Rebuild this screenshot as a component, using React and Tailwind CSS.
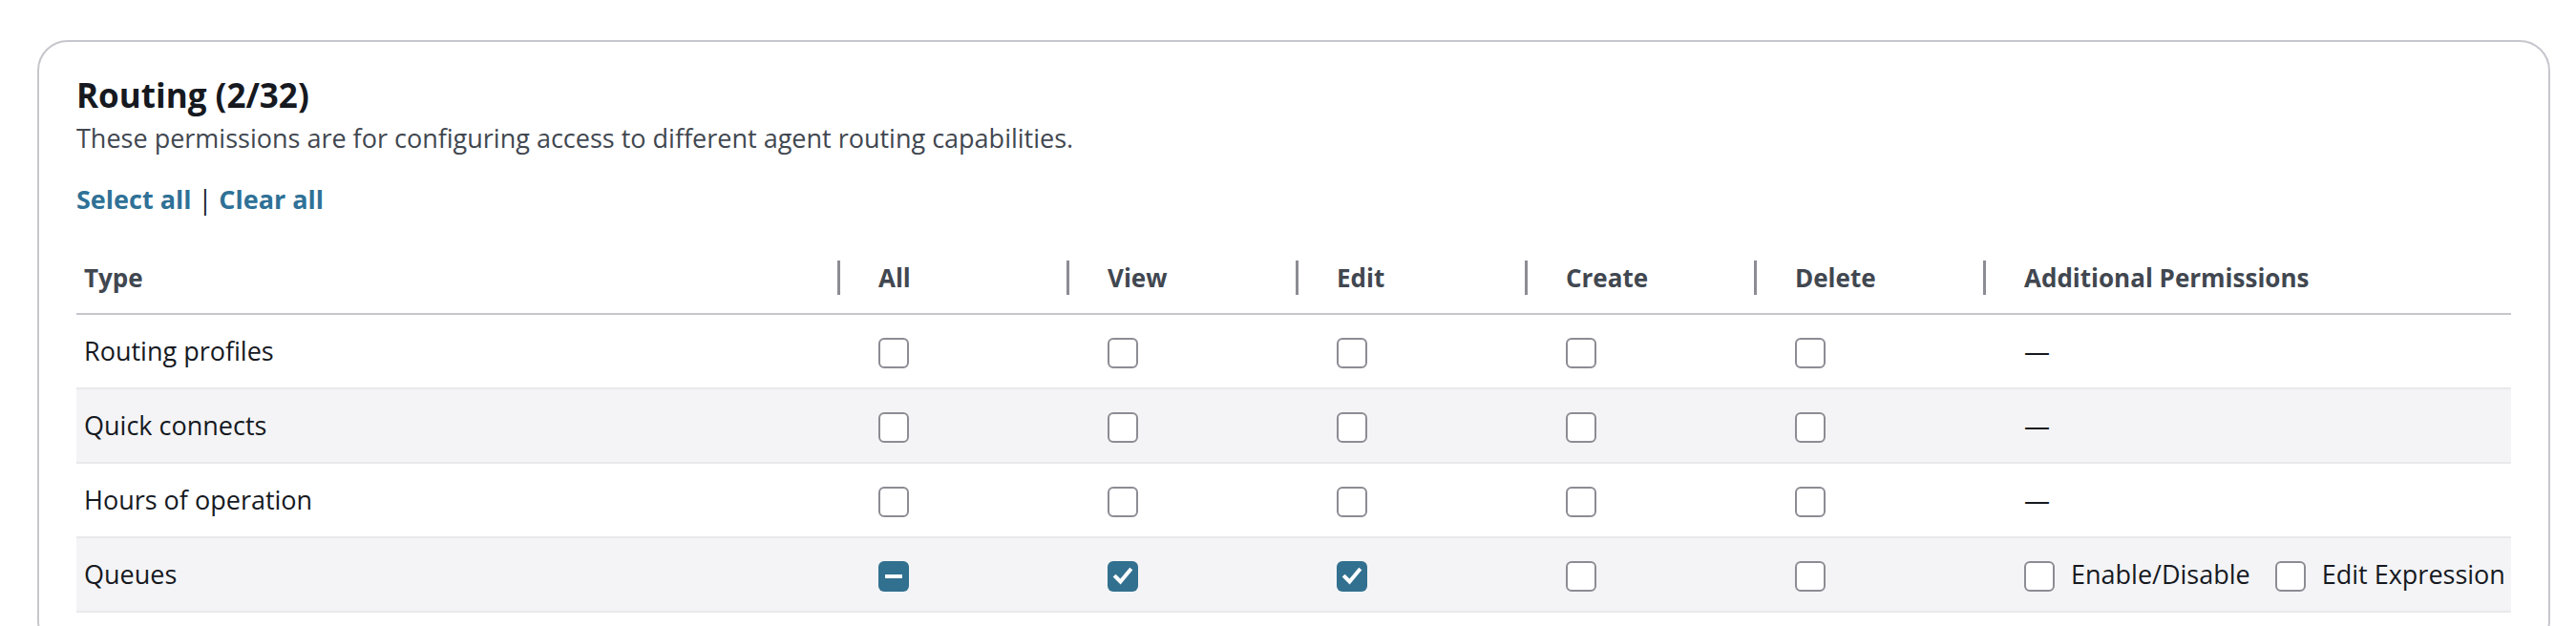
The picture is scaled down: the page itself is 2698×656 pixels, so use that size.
import React from 'react';

const font = { fontFamily: '"Open Sans", "Noto Sans", Arial, sans-serif' };

const columns = ['All', 'View', 'Edit', 'Create', 'Delete'];

const rows = [
    { name: 'Routing profiles', perms: ['off', 'off', 'off', 'off', 'off'], extra: null },
    { name: 'Quick connects', perms: ['off', 'off', 'off', 'off', 'off'], extra: null },
    { name: 'Hours of operation', perms: ['off', 'off', 'off', 'off', 'off'], extra: null },
    { name: 'Queues', perms: ['mixed', 'on', 'on', 'off', 'off'], extra: ['Enable/Disable', 'Edit Expression'] },
];

function Checkbox({ state }) {
    if (state === 'on') {
        return (
            <span className="flex h-8 w-8 shrink-0 items-center justify-center rounded-[6px] bg-[#32708f]">
                <svg width="32" height="32" viewBox="0 0 32 32" fill="none">
                    <polyline points="8.5,16.5 13.5,21.5 23.5,9.5" stroke="white" strokeWidth="4" strokeLinecap="square" strokeLinejoin="miter" />
                </svg>
            </span>
        );
    }
    if (state === 'mixed') {
        return (
            <span className="flex h-8 w-8 shrink-0 items-center justify-center rounded-[6px] bg-[#32708f]">
                <span className="block h-1 w-[18px] bg-white" />
            </span>
        );
    }
    return <span className="block h-8 w-8 shrink-0 rounded-[6px] border-2 border-[#8c8c94] bg-white" />;
}

function HeaderCell({ label, wide }) {
    return (
        <div className={`flex items-center ${wide ? 'flex-1' : 'w-[240px]'}`}>
            <span className="block h-9 w-[3px] bg-[#8c8c94]" />
            <span className="whitespace-nowrap pl-10 text-[26px] font-bold leading-9 text-[#414750]">{label}</span>
        </div>
    );
}

function Row({ row, shaded }) {
    return (
        <div className={`flex h-[78px] border-b-2 border-[#e9e9ed] ${shaded ? 'bg-[#f4f4f6]' : 'bg-white'}`}>
            <div className="flex w-[797px] items-center pl-2 text-[27px] leading-9 text-[#16191f]">{row.name}</div>
            {row.perms.map((p, i) => (
                <div key={i} className="flex w-[240px] items-center pl-[43px] pt-1">
                    <Checkbox state={p} />
                </div>
            ))}
            <div className="flex flex-1 items-center whitespace-nowrap pl-[43px] text-[27px] leading-9 text-[#16191f]">
                {row.extra ? (
                    <div className="flex items-center gap-[26px] pt-1">
                        {row.extra.map((label) => (
                            <div key={label} className="flex items-center gap-[17px]">
                                <Checkbox state="off" />
                                <span className="-mt-1">{label}</span>
                            </div>
                        ))}
                    </div>
                ) : (
                    <span>—</span>
                )}
            </div>
        </div>
    );
}

export default function App() {
    return (
        <div className="min-h-[656px] overflow-hidden bg-white pl-[39px] pr-[27px] pt-[42px]" style={font}>
            <div className="rounded-[32px] border-2 border-[#c6c6cd] bg-white px-[39px] pb-10 pt-[34px]">
                <h2 className="text-[35px] font-bold leading-[44px] text-[#16191f]">Routing (2/32)</h2>
                <p className="mt-[3px] text-[27px] leading-10 text-[#414750]">
                    These permissions are for configuring access to different agent routing capabilities.
                </p>
                <div className="mt-6 text-[27px] leading-10">
                    <a className="font-bold text-[#2f7197]">Select all</a>
                    <span className="text-[#16191f]"> | </span>
                    <a className="font-bold text-[#2f7197]">Clear all</a>
                </div>

                <div className="mt-[26px]">
                    <div className="flex border-b-2 border-[#c6c6cd] pb-[19px] pt-[18px]">
                        <div className="flex w-[797px] items-center pl-2 text-[26px] font-bold leading-9 text-[#414750]">Type</div>
                        {columns.map((c) => (
                            <HeaderCell key={c} label={c} />
                        ))}
                        <HeaderCell label="Additional Permissions" wide />
                    </div>
                    {rows.map((row, i) => (
                        <Row key={row.name} row={row} shaded={i % 2 === 1} />
                    ))}
                </div>
            </div>
        </div>
    );
}
